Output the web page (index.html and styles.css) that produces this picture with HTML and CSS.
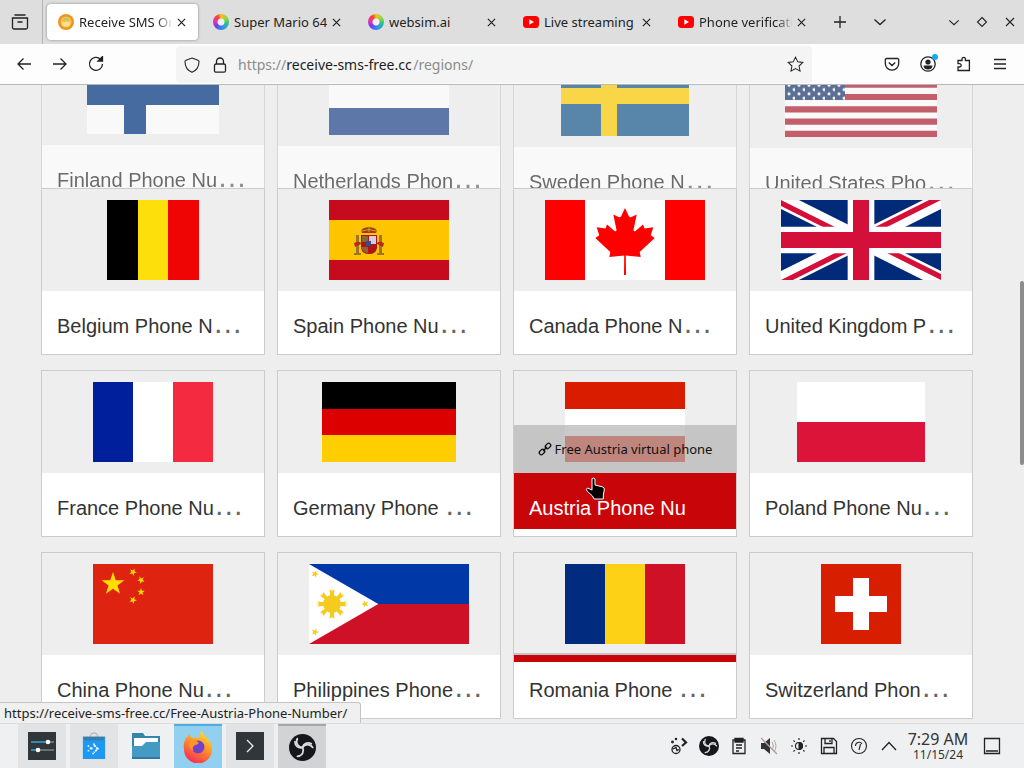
FILE: index.html
```html
<!DOCTYPE html>
<html lang="en">
<head>
<meta charset="utf-8">
<title>Receive SMS Online - Regions</title>
<link rel="stylesheet" href="styles.css">
</head>
<body>
<svg class="defs" aria-hidden="true">
  <defs>
    <symbol id="close" viewBox="0 0 10 10"><path d="M1 1l8 8M9 1l-8 8"/></symbol>
    <symbol id="chev" viewBox="0 0 14 8"><path d="M1.500 1.500L7 6.500l5.500-5"/></symbol>
    <symbol id="star5" viewBox="-10 -10 20 20"><path d="M0-10L2.300-3.200 9.500-3.100 3.700 1.200 5.900 8.100 0 3.900-5.900 8.100-3.700 1.200-9.500-3.100-2.300-3.200z"/></symbol>
    <symbol id="youtube" viewBox="0 0 16 16"><rect x="0" y="2" width="16" height="12" rx="3.500" fill="#f00"/><path d="M6.300 5.300v5.400L11 8z" fill="#fff"/></symbol>
    <symbol id="obs" viewBox="-13 -13 26 26">
      <circle r="13" fill="#16171a"/>
      <g fill="none" stroke="#dcdcdc" stroke-width="1.700" stroke-linecap="round">
        <path d="M-5-8.500C-7-4-4 0 0 0C1-4 5-5.500 8.500-3.500"/>
        <path d="M-5-8.500C-7-4-4 0 0 0" transform="rotate(120)"/>
        <path d="M-5-8.500C-7-4-4 0 0 0C1-4 5-5.500 8.500-3.500" transform="rotate(240)"/>
      </g>
    </symbol>
  </defs>
</svg>

<header class="tabbar">
  <button class="view" aria-label="Firefox View"><svg width="18" height="18" viewBox="0 0 18 18" class="line"><path d="M3.500 2h11M1.500 5h15v9.500a1.500 1.500 0 0 1-1.500 1.500H3a1.500 1.500 0 0 1-1.500-1.500zM6.500 9h5"/></svg></button>
  <nav class="tabs" aria-label="Tabs">
    <div class="tab active"><svg class="fav" viewBox="0 0 16 16"><circle cx="8" cy="8" r="8" fill="#ee9420"/><circle cx="8" cy="8" r="5.500" fill="#ffc34a"/><path d="M4 6.500Q8 1 12 6.500z" fill="#b5c47a"/><path d="M4 8h8v2.500a3 3 0 0 1-3 2H7a3 3 0 0 1-3-2z" fill="#ffe08a"/></svg><button class="name">Receive SMS Online</button><button class="x" aria-label="Close tab"><svg width="9" height="9" class="line"><use href="#close"/></svg></button></div>
    <div class="tab"><span class="fav wheel"></span><button class="name">Super Mario 64</button><button class="x" aria-label="Close tab"><svg width="9" height="9" class="line"><use href="#close"/></svg></button></div>
    <div class="tab"><span class="fav wheel"></span><button class="name">websim.ai</button><button class="x" aria-label="Close tab"><svg width="9" height="9" class="line"><use href="#close"/></svg></button></div>
    <div class="tab"><svg class="fav"><use href="#youtube"/></svg><button class="name">Live streaming</button><button class="x" aria-label="Close tab"><svg width="9" height="9" class="line"><use href="#close"/></svg></button></div>
    <div class="tab"><svg class="fav"><use href="#youtube"/></svg><button class="name">Phone verification</button><button class="x" aria-label="Close tab"><svg width="9" height="9" class="line"><use href="#close"/></svg></button></div>
  </nav>
  <button class="tool" aria-label="New tab"><svg width="12" height="12" class="line"><path d="M6 0v12M0 6h12"/></svg></button>
  <button class="tool" aria-label="List all tabs"><svg width="14" height="8" class="line"><use href="#chev"/></svg></button>
  <div class="wincontrols">
    <button aria-label="Minimize"><svg width="12" height="7" class="line"><use href="#chev"/></svg></button>
    <button aria-label="Maximize"><svg width="12" height="12" class="line thin"><path d="M6 1.500L10.500 6 6 10.500 1.500 6z"/></svg></button>
    <button aria-label="Close window"><svg width="10" height="10" class="line thin"><use href="#close"/></svg></button>
  </div>
</header>

<div class="toolbar">
  <div class="navbuttons">
    <button aria-label="Back"><svg width="16" height="16" class="line"><path d="M15 8H2M7.500 2.500L2 8l5.500 5.500"/></svg></button>
    <button aria-label="Forward"><svg width="16" height="16" class="line"><path d="M1 8h13M8.500 2.500L14 8l-5.500 5.500"/></svg></button>
    <button aria-label="Reload"><svg width="16" height="16" class="line"><path d="M12.500 3.200A6.500 6.500 0 1 0 14.500 8"/><path d="M10 5h4.500V.5z" fill="#222"/></svg></button>
  </div>
  <div class="urlbar">
    <svg width="16" height="16" class="line thin"><path d="M8 1l6 2.200c.8.300 1 .7 1 1.300 0 5-2.500 9-7 10.800C3.500 13.500 1 9.500 1 4.500c0-.6.200-1 1-1.300z"/></svg>
    <svg width="16" height="16" class="line"><rect x="2.500" y="7" width="11" height="8.200" rx="1.500"/><path d="M4.500 7V4.500a3.500 3.500 0 0 1 7 0V7"/></svg>
    <div class="address"><span>https://</span><input type="text" value="receive-sms-free.cc" aria-label="Address"><span>/regions/</span></div>
    <button aria-label="Bookmark this page"><svg width="17" height="17" viewBox="-11 -11 22 22" class="line"><path d="M0-9.500L2.900-3.400 9.500-2.600 4.600 2 5.900 8.600 0 5.400-5.900 8.600-4.600 2-9.500-2.600-2.900-3.400z"/></svg></button>
  </div>
  <div class="extras">
    <button aria-label="Pocket"><svg width="16" height="16" class="line"><path d="M2.500 2.500h11a1.200 1.200 0 0 1 1.200 1.200V7.500a6.700 6.700 0 0 1-13.400 0V3.700a1.200 1.200 0 0 1 1.200-1.200zM4.800 6.500L8 9.500l3.200-3"/></svg></button>
    <button aria-label="Account" class="account"><svg width="16" height="16"><circle cx="8" cy="8" r="7.200" fill="none" stroke="#222" stroke-width="1.300"/><circle cx="8" cy="6" r="2.600" fill="#222"/><path d="M3.500 9.500h9c0 2.500-2 4-4.500 4s-4.500-1.500-4.500-4z" fill="#222"/></svg><i></i></button>
    <button aria-label="Extensions"><svg width="16" height="16" class="line"><path d="M2 4.500h4V3a1.700 1.700 0 0 1 3.400 0v1.500h4v10H2V11h1.500a1.700 1.700 0 0 0 0-3.400H2z"/></svg></button>
    <button aria-label="Menu"><svg width="14" height="12" class="line"><path d="M1 1.500h12M1 6h12M1 10.500h12"/></svg></button>
  </div>
</div>

<main class="page">
  <div class="row leaving">
    <a class="card" href="#"><span class="flagbox"><svg width="132" height="80"><path fill="#fff" d="M0 0h132v80H0z"/><path fill="#003580" d="M37 0h22v80H37zM0 29h132v22H0z"/></svg></span><span class="label">Finland Phone Nu<b>…</b></span></a>
    <a class="card" href="#"><span class="flagbox"><svg width="120" height="80"><path fill="#ae1c28" d="M0 0h120v27H0z"/><path fill="#fff" d="M0 27h120v27H0z"/><path fill="#21468b" d="M0 53h120v27H0z"/></svg></span><span class="label">Netherlands Phon<b>…</b></span></a>
    <a class="card" href="#"><span class="flagbox"><svg width="128" height="80"><path fill="#1a5a8e" d="M0 0h128v80H0z"/><path fill="#fecc02" d="M40 0h16v80H40zM0 32h128v16H0z"/></svg></span><span class="label">Sweden Phone N<b>…</b></span></a>
    <a class="card" href="#"><span class="flagbox"><svg width="152" height="80"><defs><pattern id="stars" width="10" height="8.600" patternUnits="userSpaceOnUse"><circle cx="4" cy="2.500" r="1.500" fill="#fff"/><circle cx="9" cy="6.800" r="1.500" fill="#fff"/></pattern></defs><path fill="#fff" d="M0 0h152v80H0z"/><path stroke="#b22234" stroke-width="6.150" d="M0 3.080h152M0 15.400h152M0 27.700h152M0 40h152M0 52.300h152M0 64.600h152M0 76.900h152"/><path fill="#1f3a70" d="M0 0h60v43H0z"/><path fill="url(#stars)" d="M0 0h60v43H0z"/></svg></span><span class="label">United States Pho<b>…</b></span></a>
  </div>

  <div class="row">
    <a class="card" href="#"><span class="flagbox"><svg width="92" height="80"><path d="M0 0h31v80H0z"/><path fill="#fddf0b" d="M31 0h31v80H31z"/><path fill="#f00505" d="M61 0h31v80H61z"/></svg></span><span class="label">Belgium Phone N<b>…</b></span></a>
    <a class="card" href="#"><span class="flagbox"><svg width="120" height="80"><path fill="#c60b1e" d="M0 0h120v80H0z"/><path fill="#ffc400" d="M0 20h120v40H0z"/><path fill="#9c742a" d="M27 35h3v19h-3zM50 35h3v19h-3zM25 53h7v2h-7zM48 53h7v2h-7z"/><path fill="#b52a22" d="M25 43q7-3 7 1l-6 3zM55 43q-7-3-7 1l6 3z"/><path fill="#ad1519" d="M32 35h16v13q-1 6-8 6t-8-6z"/><path fill="#d8cbe0" d="M40 36h7v8h-7z"/><path fill="#8b6532" d="M32 47h7v6q-6-1-7-6zM33 36h6v6h-6z"/><path fill="#3d4a88" d="M37 41h5v5h-5z"/><path fill="#a13a1d" d="M33 33q-3-5 7-6 10 1 7 6z"/><path fill="none" stroke="#d6a318" d="M33 31q7-3 14 0M40 26v6"/></svg></span><span class="label">Spain Phone Nu<b>…</b></span></a>
    <a class="card" href="#"><span class="flagbox"><svg width="160" height="80"><path fill="#fff" d="M0 0h160v80H0z"/><path fill="red" d="M0 0h40v80H0zM120 0h40v80h-40zM80 8l-4 8.500q-1 1-2.500.4L68.300 14.500l3.200 15.500q0 2-2 1L62 24.500l-1.500 4-8.800-1.200 2.500 8-3.900 2.700L65.300 52l-1 5 14.900-1.500L79 75h2l-.2-19.500L95.700 57l-1-5 15-14-3.900-2.700 2.500-8-8.800 1.200-1.500-4-7.500 6.500q-2 1-2-1l3.200-15.500-5.200 2.400q-1.500.6-2.500-.4z"/></svg></span><span class="label">Canada Phone N<b>…</b></span></a>
    <a class="card" href="#"><span class="flagbox"><svg width="160" height="80" viewBox="0 0 60 30"><defs><clipPath id="uk"><path d="M30 15h30v15zv15H0zH0V0zV0h30z"/></clipPath></defs><path fill="#012a78" d="M0 0h60v30H0z"/><path stroke="#fff" stroke-width="6" d="M0 0l60 30M60 0L0 30"/><path clip-path="url(#uk)" stroke="#d4103a" stroke-width="4" d="M0 0l60 30M60 0L0 30"/><path stroke="#fff" stroke-width="10" d="M30 0v30M0 15h60"/><path stroke="#d4103a" stroke-width="6" d="M30 0v30M0 15h60"/></svg></span><span class="label">United Kingdom P<b>…</b></span></a>
  </div>

  <div class="row">
    <a class="card" href="#"><span class="flagbox"><svg width="120" height="80"><path fill="#001f9c" d="M0 0h40v80H0z"/><path fill="#fff" d="M40 0h40v80H40z"/><path fill="#f42a41" d="M80 0h40v80H80z"/></svg></span><span class="label">France Phone Nu<b>…</b></span></a>
    <a class="card" href="#"><span class="flagbox"><svg width="134" height="80"><path d="M0 0h134v27H0z"/><path fill="#d00" d="M0 27h134v27H0z"/><path fill="#ffce00" d="M0 53h134v27H0z"/></svg></span><span class="label">Germany Phone <b>…</b></span></a>
    <a class="card hovered" href="#"><span class="flagbox"><svg width="120" height="80"><path fill="#d91c00" d="M0 0h120v80H0z"/><path fill="#fff" d="M0 27h120v27H0z"/></svg><span class="caption"><svg width="14" height="14" viewBox="0 0 14 14" fill="none" stroke="#111" stroke-width="1.300"><rect x="-3" y="-2" width="6" height="4" rx="2" transform="translate(4 10) rotate(-45)"/><rect x="-3" y="-2" width="6" height="4" rx="2" transform="translate(10 4) rotate(-45)"/><path d="M5 9l4-4"/></svg>Free Austria virtual phone</span></span><span class="label">Austria Phone Nu</span>
      <svg class="cursor" width="22" height="24" viewBox="0 0 22 24"><path d="M7 1.500q2-1 3 .5v6l8 2q1.500.5 1.300 3l-1 5v4H9l-1.500-3-5.500-5q-1.500-2 .5-3l4.500 2z" stroke="#fff"/></svg></a>
    <a class="card" href="#"><span class="flagbox"><svg width="128" height="80"><path fill="#fff" d="M0 0h128v40H0z"/><path fill="#dc1439" d="M0 40h128v40H0z"/></svg></span><span class="label">Poland Phone Nu<b>…</b></span></a>
  </div>

  <div class="row">
    <a class="card" href="#"><span class="flagbox"><svg width="120" height="80"><path fill="#de2410" d="M0 0h120v80H0z"/><g fill="#ffde00"><use href="#star5" x="8" y="8" width="24" height="24"/><use href="#star5" x="36" y="4" width="8" height="8" transform="rotate(25 40 8)"/><use href="#star5" x="44" y="12" width="8" height="8" transform="rotate(45 48 16)"/><use href="#star5" x="44" y="24" width="8" height="8"/><use href="#star5" x="36" y="32" width="8" height="8" transform="rotate(25 40 36)"/></g></svg></span><span class="label">China Phone Nu<b>…</b></span></a>
    <a class="card" href="#"><span class="flagbox"><svg width="160" height="80"><path fill="#0038a8" d="M0 0h160v40H0z"/><path fill="#ce1126" d="M0 40h160v40H0z"/><path fill="#fff" d="M0 0l69.300 40L0 80z"/><g fill="#f5cb20"><circle cx="23" cy="40" r="9"/><path id="ray" d="M22 40l-1.500-15 2 2 .5-3 .5 3 2-2L24 40l1.500 15-2-2-.5 3-.5-3-2 2z"/><use href="#ray" transform="rotate(45 23 40)"/><use href="#ray" transform="rotate(90 23 40)"/><use href="#ray" transform="rotate(135 23 40)"/><use href="#star5" x="2" y="6" width="8" height="8" transform="rotate(20 6 10)"/><use href="#star5" x="2" y="64" width="8" height="8" transform="rotate(20 6 68)"/><use href="#star5" x="52" y="36" width="8" height="8" transform="rotate(-20 56 40)"/></g></svg></span><span class="label">Philippines Phone<b>…</b></span></a>
    <a class="card closing" href="#"><span class="flagbox"><svg width="120" height="80"><path fill="#002b7f" d="M0 0h40v80H0z"/><path fill="#fcd116" d="M40 0h40v80H40z"/><path fill="#ce1126" d="M80 0h40v80H80z"/></svg></span><span class="label">Romania Phone <b>…</b></span></a>
    <a class="card" href="#"><span class="flagbox"><svg width="80" height="80"><path fill="#d81e00" d="M0 0h80v80H0z"/><path fill="#fff" d="M32 14h16v18h18v16H48v18H32V48H14V32h18z"/></svg></span><span class="label">Switzerland Phon<b>…</b></span></a>
  </div>
  <div class="thumb"></div>
  <div class="status">https://receive-sms-free.cc/Free-Austria-Phone-Number/</div>
</main>

<footer class="taskbar">
  <div class="apps">
    <button class="open" aria-label="System Settings"><svg width="28" height="28"><path fill="#31363b" d="M0 0h28v28H0z"/><path stroke="#2fa8dc" stroke-width="1.500" d="M3 10h17M3 18h7"/><path stroke="#7d8286" stroke-width="1.500" d="M20 10h6M10 18h16"/><circle cx="20" cy="10" r="2.300" fill="#fff"/><circle cx="10" cy="18" r="2.300" fill="#fff"/></svg></button>
    <button class="open" aria-label="Discover"><svg width="26" height="30" viewBox="0 0 28 32"><path d="M10 8V6a4 4 0 0 1 8 0v2" fill="none" stroke="#b4bec4" stroke-width="1.500"/><path fill="#1d99f3" d="M2 6h24v24H2z"/><path fill="#3c7ca8" d="M2 6h24l-2 4H4z"/><g fill="#d8f2ff"><circle cx="8" cy="16" r="1"/><circle cx="8" cy="21" r="1"/><circle cx="11" cy="18.500" r="1.500"/><circle cx="13" cy="24" r="1"/><circle cx="14" cy="14" r="1"/></g><path d="M14 15l4 4-4 4" fill="none" stroke="#fff" stroke-width="2" stroke-dasharray="2.500 1"/></svg></button>
    <button aria-label="Files"><svg width="30" height="28"><path fill="#3584ab" d="M1 1h11l2 3h15v20H1z"/><path fill="#fff" d="M3 6h24v12H3z"/><path fill="#439bc4" d="M1 14h10l4-4h14v16H1z"/><path fill="#2c7aa5" d="M1 25h28v2H1z"/></svg></button>
    <button class="current" aria-label="Firefox"><svg width="32" height="32" viewBox="0 0 32 32"><defs><linearGradient id="ff" x1=".8" y1="0" x2=".3" y2="1"><stop offset="0" stop-color="#ffe838"/><stop offset=".45" stop-color="#ff9528"/><stop offset="1" stop-color="#f52b55"/></linearGradient></defs><path fill="url(#ff)" d="M4 7q2-1 3-4 1 3 4 4 3-1 6 0-1-3 3-7 1 4 5 7 6 6 5 12A14 14 0 0 1 2 18Q1 12 4 7z"/><circle cx="16" cy="16" r="6.500" fill="#7440c8"/><path fill="#ff9528" d="M7 10q5-3 9 1 2 2-3 3-4 3-1 6-6-2-5-10z"/></svg></button>
    <button class="open" aria-label="Terminal"><svg width="28" height="28"><path fill="#31363b" d="M0 0h28v28H0z"/><path d="M11 8l6 6-6 6" fill="none" stroke="#eee" stroke-width="1.300"/></svg></button>
    <button class="running" aria-label="OBS Studio"><svg width="27" height="27"><use href="#obs"/></svg></button>
  </div>
  <div class="tray">
    <button aria-label="Updates"><svg width="18" height="18" class="line"><circle cx="6" cy="12.500" r="4"/><path d="M3 12l3-1.500 1 3 2-1"/><circle cx="2.500" cy="5" r=".8"/><circle cx="6" cy="2" r=".6"/><path stroke-width="2.200" d="M12 1.500l4 4-4 3.500"/></svg></button>
    <button aria-label="OBS"><svg width="20" height="20"><use href="#obs"/></svg></button>
    <button aria-label="Clipboard"><svg width="16" height="18" class="line"><path d="M2 3h12v13.500H2zM5 8h6M5 11h6M5 14h3"/><path fill="#222" d="M4 1.500h8V5H4z"/></svg></button>
    <button aria-label="Volume muted"><svg width="18" height="18"><path d="M1 6h3l6-5v16l-6-5H1z" fill="#333"/><path d="M12 5q3 4 0 8M14 3q4 6 0 12" fill="none" stroke="#aaa"/><path d="M1 1l16 16" stroke="#b99" stroke-width="1.300"/></svg></button>
    <button aria-label="Brightness"><svg width="18" height="18" class="line thin"><circle cx="9" cy="9" r="3.500"/><path fill="#222" d="M9 5.500a3.500 3.500 0 0 1 0 7z"/><path d="M9 1v2M9 15v2M1 9h2M15 9h2M3.500 3.500l1.300 1.300M13.200 13.200l1.300 1.300M14.500 3.500l-1.300 1.300M4.800 13.200l-1.300 1.300"/></svg></button>
    <button aria-label="Disks"><svg width="18" height="18" class="line"><path d="M1.500 1.500h12l3 3v12h-15zM5 1.500v5h7v-5M4 16.500v-6h10v6M10 3v2"/></svg></button>
    <button aria-label="Power"><svg width="18" height="18" class="line thin"><circle cx="9" cy="9" r="7.500"/><path d="M5.500 9a3.500 3.500 0 0 1 6.500-2M9 13l1.500-6"/></svg></button>
    <button aria-label="Show hidden icons"><svg width="18" height="12" class="line"><path d="M2 10l7-7.500 7 7.500"/></svg></button>
    <time class="clock"><span>7:29 AM</span><small>11/15/24</small></time>
    <button aria-label="Show desktop"><svg width="18" height="18" class="line"><path d="M1.500 1.500h15v15h-15zM3 14h12"/></svg></button>
  </div>
</footer>
</body>
</html>
```
FILE: styles.css
```css
* { box-sizing: border-box; }
body {
  margin: 0;
  height: 100vh;
  display: flex;
  flex-direction: column;
  overflow: hidden;
  background: #eee;
  color: #222;
  font: 13px/20px "Noto Sans", sans-serif;
}
button {
  border: 0;
  padding: 0;
  background: none;
  font: inherit;
  color: inherit;
  display: flex;
  align-items: center;
  justify-content: center;
}
svg { display: block; flex: none; }
.defs { position: absolute; width: 0; height: 0; }
.line { fill: none; stroke: #222; stroke-width: 1.3; }
.thin { stroke-width: 1.1; }

/* Tab strip */
.tabbar { display: flex; height: 44px; background: #dedede; flex: none; }
.view { width: 43px; border-right: 1px solid #b4b4b4; padding-right: 2px; }
.tabs { display: flex; flex: 0 1 777px; padding-left: 2px; min-width: 0; }
.tab {
  flex: 1 1 0;
  min-width: 0;
  display: flex;
  align-items: center;
  gap: 5px;
  margin: 4px 2px;
  padding: 0 12px 0 11px;
  border-radius: 4px;
}
.active { background: #fff; box-shadow: 0 0 3px #888; }
.fav { width: 16px; height: 16px; flex: none; }
.wheel {
  border-radius: 50%;
  background: radial-gradient(circle, #f3eef8 0 3px, transparent 4px),
    conic-gradient(#f5c518, #8bd448 60deg, #2ac48c 100deg, #2f8df5 170deg, #7a3cf0 230deg, #e535ab 280deg, #f5452e 330deg, #f5c518);
}
.name {
  flex: 1;
  min-width: 0;
  display: block;
  text-align: left;
  white-space: nowrap;
  overflow: hidden;
}
.active .name, .tab:last-child .name {
  -webkit-mask-image: linear-gradient(90deg, #000 78px, transparent 94px);
  mask-image: linear-gradient(90deg, #000 78px, transparent 94px);
}
.x { width: 9px; }
.tool { width: 40px; }
.wincontrols { display: flex; margin-left: auto; }
.wincontrols button { width: 28px; }

/* Navigation bar */
.toolbar {
  display: flex;
  height: 41px;
  flex: none;
  background: #fdfdfd;
  border-bottom: 1px solid #b8b8b8;
}
.navbuttons { display: flex; padding-left: 6px; width: 176px; }
.navbuttons button { width: 36px; }
.urlbar {
  flex: 1;
  display: flex;
  align-items: center;
  gap: 12px;
  margin: 2px 0 1px;
  padding: 0 8px;
  background: #f4f4f4;
  border-radius: 4px;
}
.address { flex: 1; display: flex; margin-left: -2px; font-size: 14px; color: #8c8c8c; }
.address input {
  border: 0;
  padding: 0;
  background: none;
  font: inherit;
  color: #1c1c1c;
  width: 127px;
  field-sizing: content;
}
.extras { display: flex; padding: 0 6px 0 62px; }
.extras button { width: 36px; }
.account { position: relative; }
.account i {
  position: absolute;
  top: 10px;
  right: 8px;
  width: 6px;
  height: 6px;
  border-radius: 50%;
  background: #18a8ea;
}

/* Region cards */
.page {
  flex: 1;
  min-height: 0;
  position: relative;
  overflow: hidden;
  font-family: "Liberation Sans", Arial, sans-serif;
}
.row {
  display: grid;
  grid-template-columns: repeat(4, 1fr);
  gap: 12px;
  margin: 0 51px 15px 41px;
}
.card {
  display: block;
  position: relative;
  border: 1px solid #ccc;
  background: #fff;
  color: #333;
  text-decoration: none;
}
.flagbox {
  position: relative;
  display: flex;
  align-items: center;
  justify-content: center;
  height: 102px;
  background: #eee;
}
.label {
  display: block;
  padding: 20px 15px 13px;
  font-size: 20px;
  line-height: 30px;
  white-space: nowrap;
}
.label b { font-size: 30px; font-weight: normal; line-height: 0; color: #666; }
.leaving { height: 103px; margin-bottom: 0; overflow: hidden; align-items: start; }
.leaving .card { opacity: .7; margin-top: -43px; }
.leaving .card:nth-child(2) { margin-top: -42px; }
.leaving .card:nth-child(3) { margin-top: -41px; }
.leaving .card:nth-child(4) { margin-top: -40px; }
.caption {
  position: absolute;
  inset: auto 0 0;
  height: 48px;
  display: flex;
  align-items: center;
  justify-content: center;
  gap: 3px;
  background: rgba(180, 180, 180, .7);
  color: #111;
  font: 13px/20px "Noto Sans", sans-serif;
}
.hovered .label {
  background: #c80508;
  color: #fff;
  padding-bottom: 6px;
  margin-bottom: 7px;
}
.cursor { position: absolute; left: 71px; top: 106px; }
.closing .label { background: linear-gradient(#c80508 7px, #fff 7px); }
.closing .flagbox { box-shadow: inset 0 -2px #c4c4c4; }
.thumb {
  position: absolute;
  right: 0;
  top: 196px;
  width: 4px;
  height: 184px;
  border-radius: 2px;
  background: #8c8c8c;
}
.status {
  position: absolute;
  left: 0;
  bottom: 0;
  padding: 0 13px 0 4px;
  border: 1px solid #c4c4c4;
  border-width: 1px 1px 0 0;
  border-radius: 0 3px 0 0;
  background: #f0f0f0;
  font-family: "Noto Sans", sans-serif;
}

/* Desktop panel */
.taskbar {
  display: flex;
  justify-content: space-between;
  height: 45px;
  flex: none;
  background: #eff0f1;
  border-top: 1px solid #dcdcdc;
}
.apps { display: flex; gap: 4px; padding-left: 18px; }
.apps button { width: 48px; }
.apps .open { background: #e2e3e4; }
.apps .current { background: #93cfee; border-top: 2px solid #4aaede; }
.apps .running { background: #d2d3d4; border-top: 2px solid #a4a6a8; }
.tray { display: flex; align-items: center; padding-right: 17px; }
.tray button { width: 30px; }
.clock {
  display: flex;
  flex-direction: column;
  align-items: center;
  width: 72px;
  margin-left: -2px;
  margin-right: 3px;
  font-size: 16px;
  line-height: 18px;
  color: #333;
}
.clock small { font-size: 12px; line-height: 14px; }
```
